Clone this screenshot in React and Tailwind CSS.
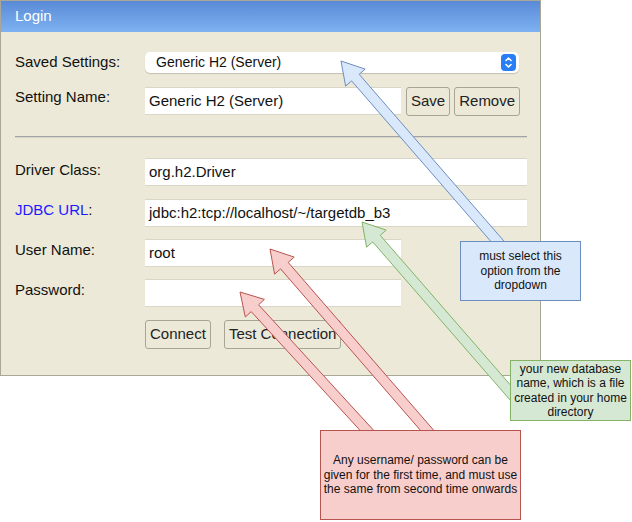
import React from 'react';

const font = { fontFamily: '"Liberation Sans", Arial, sans-serif' };

// block arrow (draw.io style) from tail to tip
const arrowPoints = (tip, tail, w = 10, hw = 26, hl = 22) => {
  const dx = tail[0] - tip[0];
  const dy = tail[1] - tip[1];
  const len = Math.hypot(dx, dy);
  const ux = dx / len;
  const uy = dy / len;
  const nx = -uy;
  const ny = ux;
  const bx = tip[0] + ux * hl;
  const by = tip[1] + uy * hl;
  const p = (x, y) => `${x.toFixed(1)},${y.toFixed(1)}`;
  return [
    p(tip[0], tip[1]),
    p(bx + (nx * hw) / 2, by + (ny * hw) / 2),
    p(bx + (nx * w) / 2, by + (ny * w) / 2),
    p(tail[0] + (nx * w) / 2, tail[1] + (ny * w) / 2),
    p(tail[0] - (nx * w) / 2, tail[1] - (ny * w) / 2),
    p(bx - (nx * w) / 2, by - (ny * w) / 2),
    p(bx - (nx * hw) / 2, by - (ny * hw) / 2),
  ].join(' ');
};

const arrows = [
  { tip: [341, 61], tail: [505, 250], fill: '#dae8fc', stroke: '#6c8ebf' },
  { tip: [362, 222], tail: [515, 398], fill: '#d5e8d4', stroke: '#82b366' },
  { tip: [270, 249], tail: [432, 436], fill: '#f8cecc', stroke: '#b85450' },
  { tip: [240, 292], tail: [372, 436], fill: '#f8cecc', stroke: '#b85450' },
];

const Label = ({ children, blue, className = '' }) => (
  <div className={`w-[130px] shrink-0 text-[15px] leading-[18px] ${blue ? 'text-[#1a1aff]' : 'text-[#111]'} ${className}`}>
    {children}
  </div>
);

const Field = ({ value, width = 'w-[382px]' }) => (
  <div className={`${width} h-[28px] bg-white border-t border-b border-[#d9d6c8] flex items-center pl-[4px] text-[15px] text-[#111]`}>
    {value}
  </div>
);

const Btn = ({ children, className = '' }) => (
  <div className={`h-[29px] px-[4px] flex items-center border border-[#a8a596] rounded-[3px] bg-[#ece9d8] text-[15px] text-[#222] ${className}`}>
    {children}
  </div>
);

const App = () => {
  return (
    <div className="relative w-[632px] h-[522px] bg-white overflow-hidden" style={font}>
      <div className="w-[541px] h-[376px] bg-[#ece9d8] border border-[#a9a798] flex flex-col">
        <div className="h-[31px] shrink-0 bg-gradient-to-b from-[#5a8ad6] to-[#7eb2f2] flex items-center pl-[14px] text-white text-[15px]">
          Login
        </div>
        <div className="pl-[14px] flex flex-col">
          <div className="flex items-start mt-[20px]">
            <Label className="pt-[1px]">Saved Settings:</Label>
            <div className="w-[374px] h-[21px] bg-white rounded-[5px] shadow-[0_1px_1px_rgba(0,0,0,0.18)] flex items-center justify-between pl-[11px] pr-[3px] text-[14px] text-[#111]">
              <span>Generic H2 (Server)</span>
              <div className="w-[15px] h-[17px] rounded-[4px] bg-[#2a7ef5] flex items-center justify-center">
                <svg width="9" height="13" viewBox="0 0 9 13" fill="none" stroke="white" strokeWidth="1.6" strokeLinecap="round" strokeLinejoin="round">
                  <path d="M2 4.5 L4.5 2 L7 4.5" />
                  <path d="M2 8.5 L4.5 11 L7 8.5" />
                </svg>
              </div>
            </div>
          </div>
          <div className="flex items-start mt-[14px]">
            <Label className="pt-[1px]">Setting Name:</Label>
            <Field value="Generic H2 (Server)" width="w-[256px]" />
            <Btn className="ml-[5px]">Save</Btn>
            <Btn className="ml-[4px]">Remove</Btn>
          </div>
          <div className="mt-[20px] w-[512px] h-[2px] border-t border-[#a3a3a3] bg-[#d8d6cc]" />
          <div className="flex items-start mt-[20px]">
            <Label className="pt-[3px]">Driver Class:</Label>
            <Field value="org.h2.Driver" />
          </div>
          <div className="flex items-start mt-[13px]">
            <Label blue className="pt-[2px]">
              JDBC URL<span className="text-[#111]">:</span>
            </Label>
            <Field value="jdbc:h2:tcp://localhost/~/targetdb_b3" />
          </div>
          <div className="flex items-start mt-[12px]">
            <Label className="pt-[2px]">User Name:</Label>
            <Field value="root" width="w-[256px]" />
          </div>
          <div className="flex items-start mt-[12px]">
            <Label className="pt-[2px]">Password:</Label>
            <Field value="" width="w-[256px]" />
          </div>
          <div className="flex items-start mt-[13px] pl-[130px] gap-[13px]">
            <Btn>Connect</Btn>
            <Btn>Test Connection</Btn>
          </div>
        </div>
      </div>

      <svg className="absolute left-0 top-0 pointer-events-none" width="632" height="522">
        {arrows.map((a, i) => (
          <polygon key={i} points={arrowPoints(a.tip, a.tail)} fill={a.fill} stroke={a.stroke} strokeWidth="1" strokeLinejoin="miter" />
        ))}
      </svg>

      <div className="absolute left-[460px] top-[241px] w-[121px] h-[60px] bg-[#dae8fc] border border-[#6c8ebf] flex items-center justify-center text-center text-[12px] leading-[14.5px] text-[#111]">
        must select this<br />option from the<br />dropdown
      </div>
      <div className="absolute left-[510px] top-[360px] w-[121px] h-[61px] bg-[#d5e8d4] border border-[#82b366] flex items-center justify-center text-center text-[12px] leading-[14.5px] text-[#111]">
        your new database<br />name, which is a file<br />created in your home<br />directory
      </div>
      <div className="absolute left-[320px] top-[430px] w-[201px] h-[90px] bg-[#f8cecc] border border-[#b85450] flex items-center justify-center text-center text-[12px] leading-[14.5px] text-[#111]">
        Any username/ password can be<br />given for the first time, and must use<br />the same from second time onwards
      </div>
    </div>
  );
};

export default App;
